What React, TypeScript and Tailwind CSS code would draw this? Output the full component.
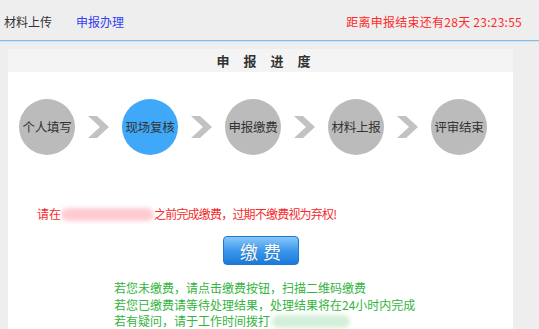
import React from "react";

const steps = [
  { label: "个人填写", active: false },
  { label: "现场复核", active: true },
  { label: "申报缴费", active: false },
  { label: "材料上报", active: false },
  { label: "评审结束", active: false },
];

function Chevron() {
  return (
    <svg width="21" height="22" viewBox="0 0 21 22" aria-hidden>
      <polygon points="0,0 9,0 21,11 9,22 0,22 12,11" fill="#c2c2c2" />
    </svg>
  );
}

export default function App() {
  return (
    <div
      className="w-[539px] h-[329px] overflow-hidden bg-[#eeeeee] text-[12px] text-[#333]"
      style={{ fontFamily: '"Microsoft YaHei", "Noto Sans CJK SC", sans-serif' }}
    >
      {/* top nav */}
      <div className="flex h-[40px] items-center pl-[4px] pr-[17px] pt-[4px]">
        <span>材料上传</span>
        <span className="ml-[24px] text-[#3340f2]">申报办理</span>
        <span className="ml-auto tracking-[0.25px] text-[#ff2a2a]">距离申报结束还有28天 23:23:55</span>
      </div>
      <div className="h-px bg-[#84bcec]" />
      <div className="h-px bg-[#cde4f7]" />

      {/* panel */}
      <div className="ml-[8px] mt-[7px] h-[400px] w-[505px] bg-white">
        <div className="flex h-[23px] items-center justify-center gap-[14px] bg-[#f4f4f4] pl-[6px] text-[13px] font-bold text-[#333]">
          <span>申</span>
          <span>报</span>
          <span>进</span>
          <span>度</span>
        </div>

        <div className="mt-[27px] flex items-center gap-[13px] pl-[11px]">
          {steps.map((s, i) => (
            <React.Fragment key={s.label}>
              {i > 0 ? <Chevron /> : null}
              <div
                className={`flex h-[56px] w-[56px] shrink-0 items-center justify-center rounded-full text-[12.5px] tracking-[-0.3px] text-[#333] ${
                  s.active ? "bg-[#3fa8f8]" : "bg-[#bbbbbb]"
                }`}
              >
                {s.label}
              </div>
            </React.Fragment>
          ))}
        </div>

        <div className="mt-[51px] flex h-[16px] items-center pl-[29px] text-[#f52a2a]">
          <span>请在</span>
          <span className="h-[13px] w-[93px] rounded-full bg-[#ffcbd3] blur-[2px]" />
          <span className="tracking-[-0.8px]">之前完成缴费，过期不缴费视为弃权!</span>
        </div>

        <div className="mt-[14px] flex justify-center">
          <button className="flex h-[29px] w-[76px] items-center justify-center gap-[5px] rounded-[4px] border border-[#1f78d6] bg-gradient-to-b from-[#86c8fb] via-[#3c98ec] to-[#1a7ad8] text-[18px] leading-none text-white [text-shadow:0_0_1px_#1d5fa8]">
            <span>缴</span>
            <span>费</span>
          </button>
        </div>

        <div className="mt-[15px] pl-[106px] text-[12px] leading-[16.5px] text-[#33b43e]">
          <div>若您未缴费，请点击缴费按钮，扫描二维码缴费</div>
          <div>若您已缴费请等待处理结果，处理结果将在24小时内完成</div>
          <div className="flex items-center">
            <span>若有疑问，请于工作时间拨打</span>
            <span className="ml-[2px] h-[13px] w-[78px] rounded-full bg-[#d3efd9] blur-[2px]" />
          </div>
        </div>
      </div>
    </div>
  );
}
